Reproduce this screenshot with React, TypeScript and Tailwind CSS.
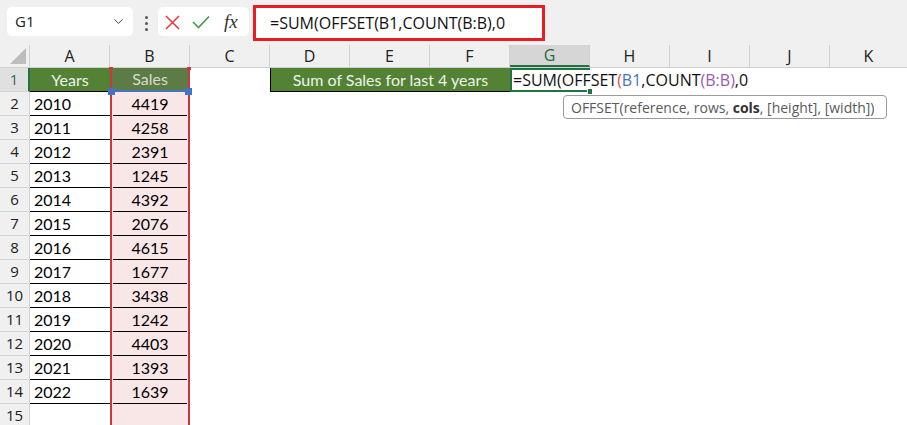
import React from 'react';
import { ChevronDown } from 'lucide-react';

// ---------- Data ----------
const sales: [string, string][] = [
  ['2010', '4419'],
  ['2011', '4258'],
  ['2012', '2391'],
  ['2013', '1245'],
  ['2014', '4392'],
  ['2015', '2076'],
  ['2016', '4615'],
  ['2017', '1677'],
  ['2018', '3438'],
  ['2019', '1242'],
  ['2020', '4403'],
  ['2021', '1393'],
  ['2022', '1639'],
];

const cols = ['A', 'B', 'C', 'D', 'E', 'F', 'G', 'H', 'I', 'J', 'K'];

const uiFont = { fontFamily: '"Open Sans", "Noto Sans", sans-serif' };
const cellFont = { fontFamily: 'Lato, "Liberation Sans", sans-serif' };

// ---------- Formula bar ----------
function FormulaBar() {
  return (
    <div className="flex h-[45px] items-start bg-[#f0f0f0]" style={uiFont}>
      <div className="ml-[7px] mt-[7px] flex h-[29px] w-[126px] items-center justify-between rounded-[5px] bg-white pl-[8px] pr-[7px]">
        <span className="text-[15px] text-[#222]">G1</span>
        <ChevronDown className="h-[15px] w-[15px] text-[#444]" strokeWidth={1.6} />
      </div>
      <div className="ml-[11px] mt-[16px] flex w-[4px] flex-col items-center gap-[3px]">
        <span className="h-[3px] w-[3px] rounded-full bg-[#555]" />
        <span className="h-[3px] w-[3px] rounded-full bg-[#555]" />
        <span className="h-[3px] w-[3px] rounded-full bg-[#555]" />
      </div>
      <div className="ml-[10px] mt-[7px] flex h-[29px] w-[91px] items-center rounded-[5px] bg-white pl-[7px]">
        <svg width="15" height="15" viewBox="0 0 15 15" className="mt-[1px]">
          <path d="M1 1 L14 14 M14 1 L1 14" stroke="#e5383b" strokeWidth="1.5" fill="none" />
        </svg>
        <svg width="18" height="14" viewBox="0 0 18 14" className="ml-[12px]">
          <path d="M1 7 L6.5 12.5 L17 1.5" stroke="#3c9c4a" strokeWidth="1.6" fill="none" />
        </svg>
        <span
          className="ml-[14px] text-[19px] italic leading-none text-[#333]"
          style={{ fontFamily: '"Liberation Serif", serif' }}
        >
          fx
        </span>
      </div>
      <div className="ml-[4px] mt-[5px] flex h-[36px] w-[292px] items-center border-[3px] border-[#ec1c24] bg-white pl-[14px]">
        <span className="whitespace-nowrap text-[16px] text-[#111]">=SUM(OFFSET(B1,COUNT(B:B),0</span>
      </div>
    </div>
  );
}

// ---------- Column headers ----------
function ColumnHeaders() {
  return (
    <div className="flex h-[23px] border-b border-[#d0d0d0] bg-[#f0f0f0] text-[16px] text-[#222]" style={uiFont}>
      <div className="relative w-[30px] shrink-0 border-r border-[#d0d0d0]">
        <svg width="16" height="16" viewBox="0 0 16 16" className="absolute right-[3px] bottom-[3px]">
          <path d="M16 0 L16 16 L0 16 Z" fill="#bdbdbd" />
        </svg>
      </div>
      {cols.map((c) =>
        c === 'G' ? (
          <div
            key={c}
            className="flex w-[80px] shrink-0 items-center justify-center border-r border-b-2 border-r-[#d0d0d0] border-b-[#217346] bg-[#d6d6d6] text-[#1e6b3c]"
          >
            {c}
          </div>
        ) : c === 'K' ? (
          <div key={c} className="flex flex-1 items-center justify-center">
            {c}
          </div>
        ) : (
          <div key={c} className="flex w-[80px] shrink-0 items-center justify-center border-r border-[#d0d0d0]">
            {c}
          </div>
        )
      )}
    </div>
  );
}

// ---------- Grid rows ----------
function RowHeader({ n }: { n: number }) {
  if (n === 1) {
    return (
      <div
        className="flex w-[30px] shrink-0 items-center justify-center border-r-2 border-b border-r-[#217346] border-b-[#d4d4d4] bg-[#e0e0e0] text-[15px] text-[#3b6b4c]"
        style={uiFont}
      >
        1
      </div>
    );
  }
  return (
    <div
      className="flex w-[30px] shrink-0 items-center justify-center border-r border-b border-[#d4d4d4] bg-[#f0f0f0] text-[15px] text-[#222]"
      style={uiFont}
    >
      {n}
    </div>
  );
}

function HeaderRow() {
  return (
    <div className="flex h-[24px]" style={cellFont}>
      <RowHeader n={1} />
      <div className="flex w-[80px] shrink-0 items-center justify-center border-b border-black bg-[#548235] text-[16px] text-[#eef3ea]">
        Years
      </div>
      <div className="relative flex w-[80px] shrink-0 items-center justify-center border-x-2 border-b-2 border-x-[#c9373f] border-b-[#4472c4] bg-[#5d7b45] text-[16px] text-[#d5dccf]">
        Sales
        <span className="absolute -left-[3px] -top-[1px] h-[3px] w-[4px] bg-[#c9373f]" />
        <span className="absolute -right-[3px] -top-[1px] h-[3px] w-[4px] bg-[#c9373f]" />
        <span className="absolute -left-[4px] -bottom-[5px] h-[7px] w-[7px] bg-[#4472c4]" />
        <span className="absolute -right-[4px] -bottom-[5px] h-[7px] w-[7px] bg-[#4472c4]" />
      </div>
      <div className="w-[80px] shrink-0" />
      <div className="flex w-[240px] shrink-0 items-center justify-center border-l border-b border-black bg-[#548235] text-[16px] text-[#eef3ea]">
        Sum of Sales for last 4 years
      </div>
      {/* active cell: the formula spills over the right edge */}
      <div
        className="relative flex w-[80px] shrink-0 items-center whitespace-nowrap border-y-2 border-l-2 border-[#217346] bg-white pl-[1px] text-[16px] text-[#111]"
        style={uiFont}
      >
        <span>
          =SUM(OFFSET<span className="text-[#d9534f]">(</span>
          <span className="text-[#4472c4]">B1</span>,COUNT
          <span className="text-[#9b59b6]">(B:B)</span>,0
        </span>
        <span className="absolute -right-[3px] -bottom-[4px] h-[5px] w-[6px] border-x border-white bg-[#217346]" />
      </div>
    </div>
  );
}

function DataRow({ n, year, value }: { n: number; year?: string; value?: string }) {
  const filled = year !== undefined;
  return (
    <div className="flex h-[24px]" style={cellFont}>
      <RowHeader n={n} />
      {filled ? (
        <div className="flex w-[80px] shrink-0 items-center border-b border-black pl-[4px] text-[16px] text-black">
          {year}
        </div>
      ) : (
        <div className="w-[80px] shrink-0" />
      )}
      <div className="w-[80px] shrink-0 border-x-2 border-[#c9373f] bg-[#f9e7e7] px-[1px]">
        {filled ? (
          <div className="flex h-full items-center justify-center border-b border-black text-[16px] text-black">
            {value}
          </div>
        ) : null}
      </div>
    </div>
  );
}

// ---------- Page ----------
export default function App() {
  return (
    <div className="relative h-[425px] w-[907px] overflow-hidden bg-white">
      <FormulaBar />
      <ColumnHeaders />
      <HeaderRow />
      {sales.map(([y, v], i) => (
        <DataRow key={y} n={i + 2} year={y} value={v} />
      ))}
      <DataRow n={15} />

      {/* function tooltip */}
      <div
        className="absolute left-[563px] top-[95px] flex h-[24px] w-[324px] items-center whitespace-nowrap rounded-[4px] border border-[#9a9a9a] bg-white pl-[7px] text-[14px] text-[#5a5a5a]"
        style={uiFont}
      >
        OFFSET(reference, rows,&nbsp;<b className="font-bold text-[#333]">cols</b>, [height], [width])
      </div>
    </div>
  );
}
